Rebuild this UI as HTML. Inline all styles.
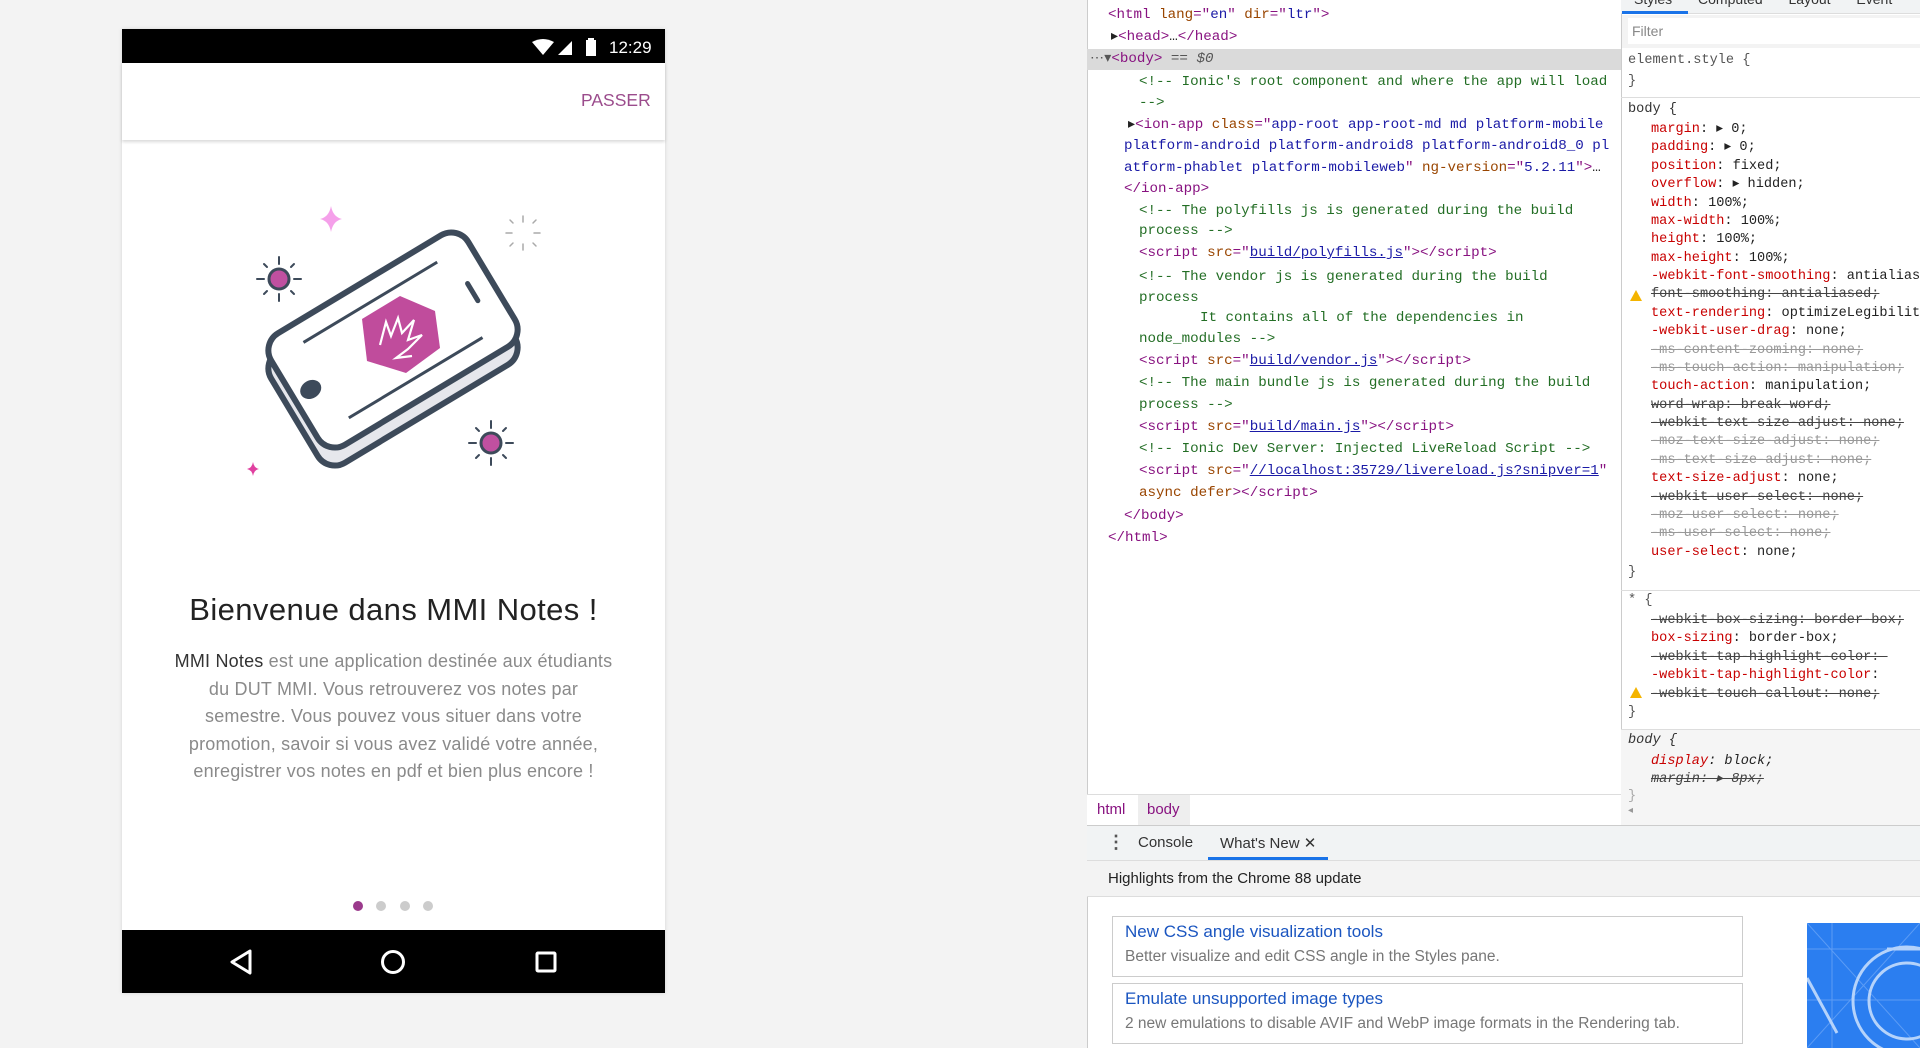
<!DOCTYPE html>
<html><head><meta charset="utf-8">
<style>
*{box-sizing:border-box;margin:0;padding:0}
body{width:1920px;height:1048px;overflow:hidden;background:#f3f3f3;font-family:"Liberation Sans",sans-serif;position:relative}
.a{position:absolute;white-space:pre}
.m{font-family:"Liberation Mono",monospace;font-size:14.2px;line-height:18px;color:#222}
.t{color:#881280}.an{color:#994500}.av{color:#1a1aa6}.c{color:#236e25}.l{color:#1a1aa6;text-decoration:underline}
.p{color:#c80000}.s{text-decoration:line-through;color:#444}.sg{text-decoration:line-through;color:#999}
.ss{font-size:13.6px}
</style></head><body>
<!-- phone -->
<div class="a" style="left:122px;top:29px;width:543px;height:964px;background:#fff;box-shadow:0 0 4px rgba(0,0,0,.12)"></div>
<div class="a" style="left:122px;top:29px;width:543px;height:34px;background:#000"></div>
<svg class="a" style="left:530px;top:37px" width="80" height="22" viewBox="0 0 80 22">
<path d="M2 5 Q13 -1 24 5 L13 18 Z" fill="#fff"/>
<path d="M42 4 L42 18 L28 18 Z" fill="#fff"/>
<rect x="56" y="3" width="10" height="16" fill="#fff"/><rect x="58" y="1" width="6" height="3" fill="#fff"/>
</svg>
<div class="a" style="left:609px;top:38px;color:#fff;font-size:17px">12:29</div>
<div class="a" style="left:122px;top:63px;width:543px;height:77px;background:#fff;box-shadow:0 2px 3px rgba(0,0,0,.15)"></div>
<div class="a" style="left:581px;top:90px;color:#9b4c8c;font-size:17.5px">PASSER</div>
<svg class="a" style="left:122px;top:140px" width="543" height="380" viewBox="122 140 543 380">
<g stroke="#3d4a5a" stroke-width="2" stroke-linecap="round" fill="none">
<line x1="279" y1="257" x2="279" y2="264"/><line x1="279" y1="294" x2="279" y2="301"/><line x1="257" y1="279" x2="264" y2="279"/><line x1="294" y1="279" x2="301" y2="279"/>
<line x1="264" y1="264" x2="267" y2="267"/><line x1="294" y1="264" x2="291" y2="267"/><line x1="264" y1="294" x2="267" y2="291"/><line x1="294" y1="294" x2="291" y2="291"/>
<line x1="491" y1="421" x2="491" y2="428"/><line x1="491" y1="458" x2="491" y2="465"/><line x1="469" y1="443" x2="476" y2="443"/><line x1="506" y1="443" x2="513" y2="443"/>
<line x1="476" y1="428" x2="479" y2="431"/><line x1="506" y1="428" x2="503" y2="431"/><line x1="476" y1="458" x2="479" y2="455"/><line x1="506" y1="458" x2="503" y2="455"/>
<g stroke="#aaa" stroke-width="1.5"><line x1="523" y1="216" x2="523" y2="222"/><line x1="523" y1="244" x2="523" y2="250"/><line x1="506" y1="233" x2="512" y2="233"/><line x1="534" y1="233" x2="540" y2="233"/><line x1="510" y1="220" x2="513" y2="223"/><line x1="536" y1="220" x2="533" y2="223"/><line x1="510" y1="246" x2="513" y2="243"/><line x1="536" y1="246" x2="533" y2="243"/></g>
</g>
<circle cx="279" cy="279" r="10" fill="#c050a0" stroke="#3d4a5a" stroke-width="3"/>
<circle cx="491" cy="443" r="10" fill="#c050a0" stroke="#3d4a5a" stroke-width="3"/>
<path d="M331 206 Q333 217 342 219 Q333 221 331 232 Q329 221 320 219 Q329 217 331 206Z" fill="#f5a0ea"/>
<path d="M253 462 Q254 468 259 469 Q254 470 253 476 Q252 470 247 469 Q252 468 253 462Z" fill="#e040a0"/>
<g transform="translate(393,358) rotate(-31)"><rect x="-115" y="-65" width="230" height="130" rx="20" fill="#e6e7ec" stroke="#3d4a5a" stroke-width="6"/></g>
<g transform="translate(393,340) rotate(-31)">
<rect x="-115" y="-65" width="230" height="130" rx="20" fill="#fff" stroke="#3d4a5a" stroke-width="6"/>
<line x1="-78" y1="-44" x2="78" y2="-44" stroke="#3d4a5a" stroke-width="3"/>
<line x1="-78" y1="44" x2="78" y2="44" stroke="#3d4a5a" stroke-width="3"/>
<ellipse cx="-96" cy="0" rx="11" ry="9" fill="#3d4a5a"/>
<line x1="93" y1="-10" x2="93" y2="10" stroke="#3d4a5a" stroke-width="5" stroke-linecap="round"/>
</g>
<polygon points="400,296 435,311 440,348 406,373 367,361 362,319" fill="#c04c9c"/>
<path d="M380 345 L386 322 L391 336 L398 318 L402 333 L414 320 L408 340 L422 335 L408 349 L396 358 L412 356" fill="none" stroke="#fff" stroke-width="2.2"/>
</svg>
<div class="a" style="left:122px;top:592px;width:543px;text-align:center;font-size:31px;letter-spacing:.4px;color:#222">Bienvenue dans MMI Notes !</div>
<div class="a" style="left:172px;top:648px;width:443px;text-align:center;font-size:18px;letter-spacing:.2px;line-height:27.6px;color:#8a8a8a;white-space:normal"><span style="color:#333">MMI Notes</span> est une application destinée aux étudiants du DUT MMI. Vous retrouverez vos notes par semestre. Vous pouvez vous situer dans votre promotion, savoir si vous avez validé votre année, enregistrer vos notes en pdf et bien plus encore !</div>
<div class="a" style="left:353px;top:901px;width:10px;height:10px;border-radius:50%;background:#9b3a8c"></div>
<div class="a" style="left:376px;top:901px;width:10px;height:10px;border-radius:50%;background:#ccc"></div>
<div class="a" style="left:400px;top:901px;width:10px;height:10px;border-radius:50%;background:#ccc"></div>
<div class="a" style="left:423px;top:901px;width:10px;height:10px;border-radius:50%;background:#ccc"></div>
<div class="a" style="left:122px;top:930px;width:543px;height:63px;background:#000"></div>
<svg class="a" style="left:122px;top:930px" width="543" height="63">
<path d="M128 21 L110 32 L128 43 Z" fill="none" stroke="#fff" stroke-width="3" stroke-linejoin="round"/>
<circle cx="271" cy="32" r="10.5" fill="none" stroke="#fff" stroke-width="3"/>
<rect x="415" y="23" width="18" height="18" rx="1" fill="none" stroke="#fff" stroke-width="3"/>
</svg>
<!-- devtools -->
<div class="a" style="left:1087px;top:0;width:833px;height:1048px;background:#fff;border-left:1px solid #ccc"></div>
<div class="a" style="left:1087px;top:49px;width:534px;height:21px;background:#dadada"></div>
<div class="a m" style="left:1108px;top:6px"><span class="t">&lt;html</span> <span class="an">lang</span><span class="t">="</span><span class="av">en</span><span class="t">"</span> <span class="an">dir</span><span class="t">="</span><span class="av">ltr</span><span class="t">"&gt;</span></div>
<div class="a m" style="left:1111px;top:28px">▸<span class="t">&lt;head&gt;</span>…<span class="t">&lt;/head&gt;</span></div>
<div class="a m" style="left:1090px;top:50px;color:#555">⋯▾<span class="t">&lt;body&gt;</span> == <i>$0</i></div>
<div class="a m c" style="left:1139px;top:73px">&lt;!-- Ionic's root component and where the app will load</div>
<div class="a m c" style="left:1139px;top:94px">--&gt;</div>
<div class="a m" style="left:1128px;top:116px">▸<span class="t">&lt;ion-app</span> <span class="an">class</span><span class="t">="</span><span class="av">app-root app-root-md md platform-mobile</span></div>
<div class="a m av" style="left:1124px;top:137px">platform-android platform-android8 platform-android8_0 pl</div>
<div class="a m" style="left:1124px;top:159px"><span class="av">atform-phablet platform-mobileweb</span><span class="t">"</span> <span class="an">ng-version</span><span class="t">="</span><span class="av">5.2.11</span><span class="t">"&gt;</span>…</div>
<div class="a m t" style="left:1124px;top:180px">&lt;/ion-app&gt;</div>
<div class="a m c" style="left:1139px;top:202px">&lt;!-- The polyfills js is generated during the build</div>
<div class="a m c" style="left:1139px;top:222px">process --&gt;</div>
<div class="a m" style="left:1139px;top:244px"><span class="t">&lt;script</span> <span class="an">src</span><span class="t">="</span><span class="l">build/polyfills.js</span><span class="t">"&gt;&lt;/script&gt;</span></div>
<div class="a m c" style="left:1139px;top:268px">&lt;!-- The vendor js is generated during the build</div>
<div class="a m c" style="left:1139px;top:289px">process</div>
<div class="a m c" style="left:1200px;top:309px">It contains all of the dependencies in</div>
<div class="a m c" style="left:1139px;top:330px">node_modules --&gt;</div>
<div class="a m" style="left:1139px;top:352px"><span class="t">&lt;script</span> <span class="an">src</span><span class="t">="</span><span class="l">build/vendor.js</span><span class="t">"&gt;&lt;/script&gt;</span></div>
<div class="a m c" style="left:1139px;top:374px">&lt;!-- The main bundle js is generated during the build</div>
<div class="a m c" style="left:1139px;top:396px">process --&gt;</div>
<div class="a m" style="left:1139px;top:418px"><span class="t">&lt;script</span> <span class="an">src</span><span class="t">="</span><span class="l">build/main.js</span><span class="t">"&gt;&lt;/script&gt;</span></div>
<div class="a m c" style="left:1139px;top:440px">&lt;!-- Ionic Dev Server: Injected LiveReload Script --&gt;</div>
<div class="a m" style="left:1139px;top:462px"><span class="t">&lt;script</span> <span class="an">src</span><span class="t">="</span><span class="l">//localhost:35729/livereload.js?snipver=1</span><span class="t">"</span></div>
<div class="a m" style="left:1139px;top:484px"><span class="an">async</span> <span class="an">defer</span><span class="t">&gt;&lt;/script&gt;</span></div>
<div class="a m t" style="left:1124px;top:507px">&lt;/body&gt;</div>
<div class="a m t" style="left:1108px;top:529px">&lt;/html&gt;</div>
<!-- breadcrumbs -->
<div class="a" style="left:1087px;top:794px;width:534px;height:31px;border-top:1px solid #ddd;background:#fff"></div>
<div class="a" style="left:1138px;top:795px;width:52px;height:30px;background:#eee"></div>
<div class="a" style="left:1097px;top:801px;font-size:15px;color:#881280">html</div>
<div class="a" style="left:1147px;top:801px;font-size:15px;color:#881280">body</div>
<!-- styles pane -->
<div class="a" style="left:1621px;top:0;width:299px;height:825px;background:#fff;border-left:1px solid #ccc"></div>
<div class="a" style="left:1621px;top:0;width:299px;height:14px;background:#f1f3f4;border-bottom:1px solid #ddd"></div>
<div class="a" style="left:1634px;top:-9px;font-size:14px;color:#333;word-spacing:22px">Styles Computed Layout Event</div>
<div class="a" style="left:1622px;top:11px;width:66px;height:3px;background:#1a73e8"></div>
<div class="a" style="left:1622px;top:15px;width:298px;height:33px;background:#f3f3f3"></div>
<div class="a" style="left:1628px;top:18px;width:292px;height:26px;background:#fff"></div>
<div class="a" style="left:1632px;top:23px;font-size:14px;color:#888">Filter</div>
<div class="a" style="left:1621px;top:97px;width:299px;height:1px;background:#ddd"></div>
<div class="a m ss" style="left:1628px;top:52px;color:#555">element.style {</div>
<div class="a m ss" style="left:1628px;top:73px;color:#555">}</div>
<div class="a m ss" style="left:1628px;top:101px;color:#333">body {</div>
<div class="a m ss" style="left:1651px;top:121px;line-height:18.37px"><span class="p">margin</span>: ▸ 0;
<span class="p">padding</span>: ▸ 0;
<span class="p">position</span>: fixed;
<span class="p">overflow</span>: ▸ hidden;
<span class="p">width</span>: 100%;
<span class="p">max-width</span>: 100%;
<span class="p">height</span>: 100%;
<span class="p">max-height</span>: 100%;
<span class="p">-webkit-font-smoothing</span>: antialiased;
<span class="s">font-smoothing: antialiased;</span>
<span class="p">text-rendering</span>: optimizeLegibility;
<span class="p">-webkit-user-drag</span>: none;
<span class="sg">-ms-content-zooming: none;</span>
<span class="sg">-ms-touch-action: manipulation;</span>
<span class="p">touch-action</span>: manipulation;
<span class="s">word-wrap: break-word;</span>
<span class="s">-webkit-text-size-adjust: none;</span>
<span class="sg">-moz-text-size-adjust: none;</span>
<span class="sg">-ms-text-size-adjust: none;</span>
<span class="p">text-size-adjust</span>: none;
<span class="s">-webkit-user-select: none;</span>
<span class="sg">-moz-user-select: none;</span>
<span class="sg">-ms-user-select: none;</span>
<span class="p">user-select</span>: none;</div>
<div class="a" style="left:1630px;top:290px;width:0;height:0;border-left:6px solid transparent;border-right:6px solid transparent;border-bottom:11px solid #f4b400"></div>
<div class="a m ss" style="left:1628px;top:564px;color:#555">}</div>
<div class="a" style="left:1621px;top:590px;width:299px;height:1px;background:#ddd"></div>
<div class="a m ss" style="left:1628px;top:592px;color:#555">* {</div>
<div class="a m ss" style="left:1651px;top:612px;line-height:18.37px"><span class="s">-webkit-box-sizing: border-box;</span>
<span class="p">box-sizing</span>: border-box;
<span class="s">-webkit-tap-highlight-color: </span>
<span class="p">-webkit-tap-highlight-color</span>: 
<span class="s">-webkit-touch-callout: none;</span></div>
<div class="a" style="left:1630px;top:687px;width:0;height:0;border-left:6px solid transparent;border-right:6px solid transparent;border-bottom:11px solid #f4b400"></div>
<div class="a m ss" style="left:1628px;top:704px;color:#555">}</div>
<div class="a" style="left:1621px;top:729px;width:299px;height:96px;background:#f5f5f5;border-top:1px solid #ddd"></div>
<div class="a m ss" style="left:1628px;top:732px;color:#333;font-style:italic">body {</div>
<div class="a m ss" style="left:1651px;top:753px;font-style:italic;line-height:18.37px"><span class="p">display</span>: block;
<span class="s">margin: ▸ 8px;</span></div>
<div class="a m ss" style="left:1628px;top:788px;color:#aaa">}</div>
<div class="a" style="left:1628px;top:805px;font-size:10px;color:#999">◂</div>
<!-- drawer -->
<div class="a" style="left:1087px;top:825px;width:833px;height:36px;background:#f1f3f4;border-top:1px solid #ccc;border-bottom:1px solid #ddd"></div>
<div class="a" style="left:1107px;top:832px;font-size:18px;color:#555;font-weight:bold">⋮</div>
<div class="a" style="left:1138px;top:834px;font-size:15px;color:#333">Console</div>
<div class="a" style="left:1220px;top:834px;font-size:15px;color:#333">What's New ✕</div>
<div class="a" style="left:1208px;top:857px;width:120px;height:3px;background:#1a73e8"></div>
<div class="a" style="left:1087px;top:861px;width:833px;height:36px;background:#f3f3f3;border-bottom:1px solid #ddd"></div>
<div class="a" style="left:1108px;top:870px;font-size:15px;color:#222">Highlights from the Chrome 88 update</div>
<div class="a" style="left:1112px;top:916px;width:631px;height:61px;border:1px solid #ccc;background:#fff"></div>
<div class="a" style="left:1125px;top:922px;font-size:17px;color:#1a55c0">New CSS angle visualization tools</div>
<div class="a" style="left:1125px;top:948px;font-size:15.5px;color:#777">Better visualize and edit CSS angle in the Styles pane.</div>
<div class="a" style="left:1112px;top:983px;width:631px;height:61px;border:1px solid #ccc;background:#fff"></div>
<div class="a" style="left:1125px;top:989px;font-size:17px;color:#1a55c0">Emulate unsupported image types</div>
<div class="a" style="left:1125px;top:1015px;font-size:15.5px;color:#777">2 new emulations to disable AVIF and WebP image formats in the Rendering tab.</div>
<svg class="a" style="left:1807px;top:923px" width="113" height="125">
<rect width="113" height="125" fill="#2b7ef0"/>
<g stroke="#5c9cf5" stroke-width="1" fill="none"><line x1="0" y1="26" x2="113" y2="26"/><line x1="0" y1="77" x2="113" y2="77"/><line x1="25" y1="0" x2="25" y2="125"/><line x1="0" y1="0" x2="113" y2="125"/><line x1="0" y1="125" x2="113" y2="0"/></g>
<g stroke="#b5d3fb" stroke-width="3" fill="none"><circle cx="100" cy="78" r="54"/><circle cx="100" cy="78" r="38"/><line x1="0" y1="55" x2="30" y2="110"/><line x1="80" y1="26" x2="113" y2="26"/></g>
</svg>
</body></html>
